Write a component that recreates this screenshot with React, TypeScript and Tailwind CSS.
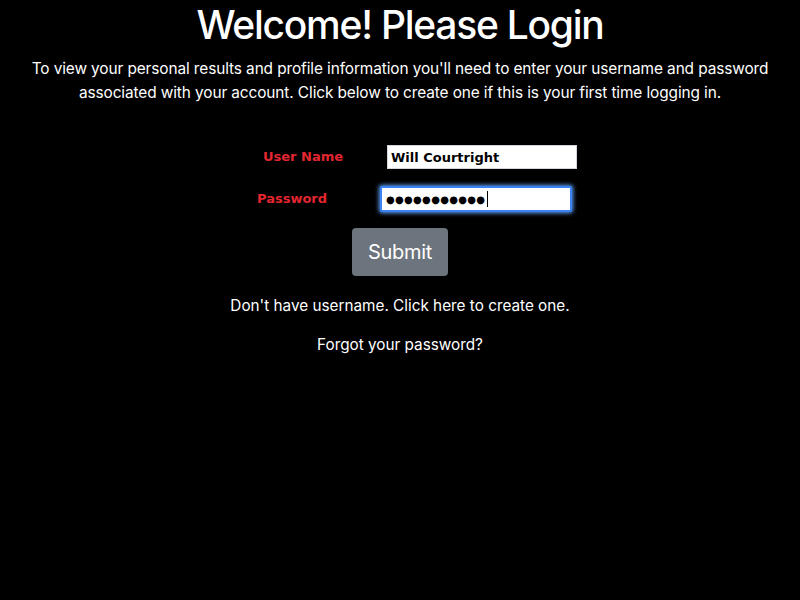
import React from "react";

export default function App() {
  return (
    <div className="min-h-[600px] w-full bg-black text-white text-center font-['Inter','Liberation_Sans',Arial,sans-serif]">
      {/* Heading */}
      <h1 className="text-[39px] leading-[48px] font-medium tracking-[-1.25px] pt-[1px]">Welcome! Please Login</h1>
      <p className="mt-2 text-[15.4px] leading-6 px-4 tracking-[-0.1px]">
        To view your personal results and profile information you'll need to enter your username and password
        associated with your account. Click below to create one if this is your first time logging in.
      </p>

      {/* Form */}
      <div className="mt-[40px] flex flex-col font-['DejaVu_Sans',Verdana,sans-serif] text-[13px] font-bold">
        <div className="flex items-center h-6 pl-[263px]">
          <label className="text-[#e3262f] w-[124px] text-left -mt-[1px]">User Name</label>
          <input
            readOnly
            value="Will Courtright"
            className="w-[190px] h-6 bg-white text-black px-[3px] border border-gray-300 outline-none font-bold"
          />
        </div>
        <div className="flex items-center h-[26px] pl-[257px] mt-[17px]">
          <label className="text-[#e3262f] w-[123px] text-left -mt-[1px]">Password</label>
          <div className="w-[192px] h-[26px] bg-white border-2 border-[#3b82f6] shadow-[0_0_4px_1px_#60a5fa] rounded-[2px] flex items-center px-[4px] text-black text-[10px] tracking-[0.3px]">
            <span>●●●●●●●●●●●</span>
            <span className="ml-[2px] w-px h-4 bg-black" />
          </div>
        </div>
      </div>

      <button className="mt-4 w-24 h-12 rounded bg-[#6c757d] text-white text-xl tracking-[-0.3px]">Submit</button>

      <p className="mt-[18px] text-[15.3px] leading-6">Don't have username. Click here to create one.</p>
      <p className="mt-[15px] text-[15.3px] leading-6">Forgot your password?</p>
    </div>
  );
}
